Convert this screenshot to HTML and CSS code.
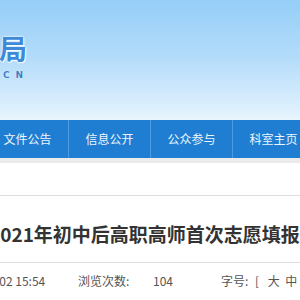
FILE: index.html
```html
<!DOCTYPE html>
<html lang="zh-CN">
<head>
    <meta charset="UTF-8">
    <meta name="viewport" content="width=device-width, initial-scale=1.0">
    <title>2021年初中后高职高师首次志愿填报</title>
    <link rel="stylesheet" href="styles.css">
</head>
<body>

    <!-- Header banner -->
    <div class="header">
        <div class="logo">
            <div class="logo-name">局</div>
            <div class="logo-site">CN</div>
        </div>
    </div>
    <div class="header-edge"></div>

    <!-- Main navigation -->
    <div class="nav">
        <a class="nav-item">文件公告</a>
        <a class="nav-item">信息公开</a>
        <a class="nav-item">公众参与</a>
        <a class="nav-item">科室主页</a>
    </div>
    <div class="nav-shadow"></div>

    <!-- Article -->
    <div class="article">
        <h1 class="article-title">2021年初中后高职高师首次志愿填报</h1>
        <div class="article-meta">
            <span class="meta-date">2021-07-02 15:54</span>
            <span class="meta-views">浏览次数:</span>
            <span class="meta-count">104</span>
            <span class="meta-size">字号: <span class="bracket">[</span> 大 &nbsp;中</span>
        </div>
    </div>

</body>
</html>
```

FILE: styles.css
```css
body {
    margin: 0;
    padding: 0;
    width: 300px;
    height: 300px;
    overflow: hidden;
    background: #fff;
    font-family: "Microsoft YaHei", "Noto Sans CJK SC", "Noto Sans", sans-serif;
}

/* Header */
.header {
    height: 117px;
    background: linear-gradient(to bottom, #95cef8 0%, #b4dcfa 50%, #e4f3fd 100%);
}

.logo {
    padding-top: 30px;
}

.logo-name {
    font-size: 28px;
    font-weight: bold;
    line-height: 36px;
    color: #3d8ad9;
    text-shadow: 0 0 2px #fff, 0 0 2px #fff, 1px 1px 1px #fff;
    margin-left: -1px;
}

.logo-site {
    font-family: "DejaVu Sans", sans-serif;
    font-size: 9px;
    font-weight: bold;
    line-height: 12px;
    letter-spacing: 6px;
    color: #3b7fc6;
    margin-left: 3px;
    margin-top: 3px;
    text-shadow: 0 0 1px #fff;
}

.header-edge {
    height: 3px;
    background: #e9f5fd;
}

/* Navigation */
.nav {
    display: flex;
    height: 38px;
    background: #1f7ed2;
}

.nav-item {
    flex: none;
    box-sizing: border-box;
    width: 82px;
    border-right: 1px solid #4b9ce2;
    color: #eef5fc;
    font-size: 12px;
    line-height: 38px;
    text-align: center;
}

.nav-item:first-child {
    margin-left: -13px;
}

.nav-shadow {
    height: 5px;
    background: #ebebeb;
}

/* Article */
.article {
    padding-top: 32px;
}

.article-title {
    margin: 0 0 0 -11px;
    white-space: nowrap;
    border-top: 1px solid #dedede;
    border-bottom: 1px solid #dedede;
    padding: 26px 0 16px 0;
    font-size: 19px;
    font-weight: bold;
    line-height: 24px;
    color: #333;
}

.article-meta {
    display: flex;
    white-space: nowrap;
    font-size: 12px;
    line-height: 16px;
    color: #555;
    padding-top: 10px;
    margin-left: -49px;
}

.meta-date {
    flex: none;
    width: 127px;
}

.meta-views {
    flex: none;
    width: 75px;
}

.meta-count {
    flex: none;
    width: 68px;
}

.bracket {
    margin: 0 6px 0 4px;
}
```
